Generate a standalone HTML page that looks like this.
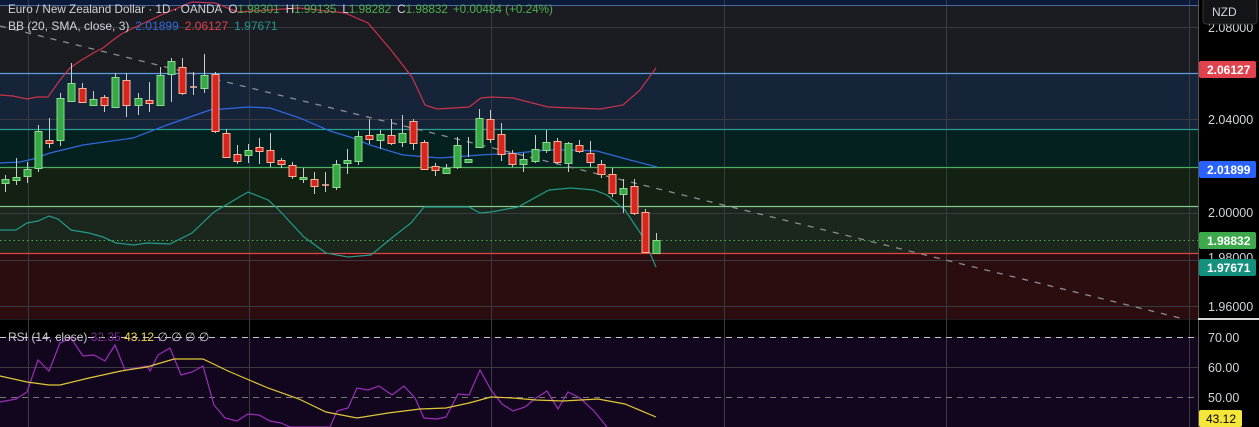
<!DOCTYPE html>
<html><head><meta charset="utf-8"><style>
html,body{margin:0;padding:0;background:#000;width:1259px;height:427px;overflow:hidden}
svg{display:block;font-family:"Liberation Sans",sans-serif}
</style></head><body>
<svg width="1259" height="427" viewBox="0 0 1259 427" xmlns="http://www.w3.org/2000/svg">
<rect x="0" y="0" width="1198" height="320" fill="#1b1c21"/>
<rect x="0" y="0" width="1198" height="5" fill="#0c1a3a"/>
<rect x="0" y="73" width="1198" height="56" fill="#16243a"/>
<rect x="0" y="129" width="1198" height="38" fill="#04201f"/>
<rect x="0" y="167" width="1198" height="40" fill="#132113"/>
<rect x="0" y="207" width="1198" height="46" fill="#1b261c"/>
<rect x="0" y="253" width="1198" height="66" fill="#2b0d10"/>
<rect x="0" y="320" width="1198" height="107" fill="#000"/>
<rect x="0" y="337" width="1198" height="90" fill="#12061f"/>
<g stroke="#3a3b40" stroke-width="1">
<line x1="0" y1="27.5" x2="1198" y2="27.5"/>
<line x1="0" y1="119.5" x2="1198" y2="119.5"/>
<line x1="0" y1="213.5" x2="1198" y2="213.5"/>
<line x1="0" y1="260.5" x2="1198" y2="260.5"/>
<line x1="0" y1="306.5" x2="1198" y2="306.5"/>
<line x1="0" y1="367.5" x2="1198" y2="367.5"/>
<line x1="28.5" y1="0" x2="28.5" y2="427"/>
<line x1="249.5" y1="0" x2="249.5" y2="427"/>
<line x1="491.5" y1="0" x2="491.5" y2="427"/>
<line x1="724.5" y1="0" x2="724.5" y2="427"/>
<line x1="946.5" y1="0" x2="946.5" y2="427"/>
<line x1="1189.5" y1="0" x2="1189.5" y2="427"/>
</g>
<line x1="0" y1="5.5" x2="1198" y2="5.5" stroke="#4f6a9a"/>
<line x1="0" y1="73.5" x2="1198" y2="73.5" stroke="#5b9fe0" stroke-width="1.3"/>
<line x1="0" y1="129.5" x2="1198" y2="129.5" stroke="#2a9d91" stroke-width="1.3"/>
<line x1="0" y1="167.5" x2="1198" y2="167.5" stroke="#4caf60" stroke-width="1.3"/>
<line x1="0" y1="206.5" x2="1198" y2="206.5" stroke="#82c98a" stroke-width="1.3"/>
<line x1="0" y1="240.5" x2="1198" y2="240.5" stroke="#4caf50" stroke-dasharray="1.5 3"/>
<line x1="0" y1="253.5" x2="1198" y2="253.5" stroke="#e04545" stroke-width="1.3"/>
<line x1="0" y1="26" x2="1180" y2="318" stroke="#8a8c92" stroke-width="1.3" stroke-dasharray="6 7"/>
<polyline fill="none" stroke="#c8334a" stroke-width="1.2" points="0,95 13,96 27,99 37,97 48,97 60,80 70,68 80,61 95,52 103,48 113,40 123,33 161,15 192,2 215,3 238,12 268,10 299,8 345,13 368,23 391,50 412,77 425,105 437,109 469,107 481,98 492,97 513,98 548,107 600,109 623,105 640,90 656,68"/>
<polyline fill="none" stroke="#2f6ae0" stroke-width="1.2" points="0,163 20,162 33,159 50,153 83,145 133,138 167,125 210,110 248,107 270,108 300,118 330,131 350,137 370,145 403,155 440,158 480,155 517,153 547,150 570,150 597,151 630,160 657,167"/>
<polyline fill="none" stroke="#239a8a" stroke-width="1.2" points="0,230 16,230 27,223 38,221 49,216 58,219 71,230 89,233 103,237 116,243 134,245 147,243 170,244 192,233 214,212 248,192 268,200 277,208 304,237 326,253 348,257 371,255 393,237 411,223 424,207 469,207 480,213 491,212 518,207 549,190 571,188 594,190 607,195 625,210 643,237 656,267"/>
<g stroke-width="1">
<g stroke="#c9cbd0">
<line x1="5.5" y1="175" x2="5.5" y2="192"/><line x1="16.5" y1="158" x2="16.5" y2="185"/><line x1="27.5" y1="162" x2="27.5" y2="183"/><line x1="38.5" y1="125" x2="38.5" y2="172"/><line x1="49.5" y1="118" x2="49.5" y2="148"/><line x1="60.5" y1="93" x2="60.5" y2="146"/><line x1="71.5" y1="63" x2="71.5" y2="102"/><line x1="82.5" y1="83" x2="82.5" y2="102"/><line x1="93.5" y1="91" x2="93.5" y2="105"/><line x1="104.5" y1="95" x2="104.5" y2="112"/><line x1="115.5" y1="73" x2="115.5" y2="108"/><line x1="126.5" y1="73" x2="126.5" y2="117"/><line x1="138.5" y1="93" x2="138.5" y2="115"/><line x1="149.5" y1="82" x2="149.5" y2="112"/><line x1="160.5" y1="67" x2="160.5" y2="105"/><line x1="171.5" y1="58" x2="171.5" y2="102"/><line x1="182.5" y1="58" x2="182.5" y2="95"/><line x1="193.5" y1="72" x2="193.5" y2="95"/><line x1="204.5" y1="54" x2="204.5" y2="93"/><line x1="215.5" y1="72" x2="215.5" y2="133"/><line x1="226.5" y1="129" x2="226.5" y2="157"/><line x1="237.5" y1="145" x2="237.5" y2="164"/><line x1="248.5" y1="144" x2="248.5" y2="163"/><line x1="259.5" y1="138" x2="259.5" y2="164"/><line x1="270.5" y1="133" x2="270.5" y2="167"/><line x1="281.5" y1="158" x2="281.5" y2="168"/><line x1="292.5" y1="162" x2="292.5" y2="179"/><line x1="303.5" y1="168" x2="303.5" y2="183"/><line x1="314.5" y1="172" x2="314.5" y2="194"/><line x1="325.5" y1="172" x2="325.5" y2="192"/><line x1="336.5" y1="160" x2="336.5" y2="190"/><line x1="347.5" y1="149" x2="347.5" y2="174"/><line x1="358.5" y1="131" x2="358.5" y2="165"/><line x1="369.5" y1="119" x2="369.5" y2="144"/><line x1="380.5" y1="130" x2="380.5" y2="149"/><line x1="391.5" y1="119" x2="391.5" y2="145"/><line x1="402.5" y1="115" x2="402.5" y2="147"/><line x1="413.5" y1="119" x2="413.5" y2="150"/><line x1="424.5" y1="140" x2="424.5" y2="170"/><line x1="435.5" y1="163" x2="435.5" y2="176"/><line x1="446.5" y1="164" x2="446.5" y2="174"/><line x1="457.5" y1="137" x2="457.5" y2="169"/><line x1="468.5" y1="137" x2="468.5" y2="157"/><line x1="479.5" y1="109" x2="479.5" y2="147"/><line x1="490.5" y1="110" x2="490.5" y2="143"/><line x1="501.5" y1="123" x2="501.5" y2="161"/><line x1="512.5" y1="150" x2="512.5" y2="167"/><line x1="523.5" y1="153" x2="523.5" y2="172"/><line x1="535.5" y1="135" x2="535.5" y2="163"/><line x1="546.5" y1="130" x2="546.5" y2="153"/><line x1="557.5" y1="138" x2="557.5" y2="164"/><line x1="568.5" y1="142" x2="568.5" y2="172"/><line x1="579.5" y1="140" x2="579.5" y2="153"/><line x1="590.5" y1="141" x2="590.5" y2="167"/><line x1="601.5" y1="160" x2="601.5" y2="178"/><line x1="612.5" y1="168" x2="612.5" y2="197"/><line x1="623.5" y1="179" x2="623.5" y2="213"/><line x1="634.5" y1="179" x2="634.5" y2="215"/><line x1="645.5" y1="209" x2="645.5" y2="253"/><line x1="656.5" y1="233" x2="656.5" y2="253"/>
</g>
<g fill="#33a845" stroke="#8fd98f">
<rect x="2" y="179.5" width="7" height="4"/><rect x="13" y="177.5" width="7" height="3"/><rect x="24" y="169.5" width="7" height="7"/><rect x="35" y="131.5" width="7" height="37"/><rect x="57" y="98.5" width="7" height="42"/><rect x="68" y="83.5" width="7" height="18"/><rect x="90" y="99.5" width="7" height="6"/><rect x="112" y="77.5" width="7" height="30"/><rect x="135" y="98.5" width="7" height="7"/><rect x="157" y="75.5" width="7" height="30"/><rect x="168" y="61.5" width="7" height="13"/><rect x="201" y="75.5" width="7" height="13"/><rect x="245" y="150.5" width="7" height="5"/><rect x="300" y="177.5" width="7" height="2"/><rect x="333" y="164.5" width="7" height="23"/><rect x="344" y="160.5" width="7" height="3"/><rect x="355" y="136.5" width="7" height="25"/><rect x="377" y="134.5" width="7" height="6"/><rect x="399" y="133.5" width="7" height="9"/><rect x="443" y="168.5" width="7" height="5"/><rect x="454" y="145.5" width="7" height="22"/><rect x="465" y="159.5" width="7" height="3"/><rect x="476" y="118.5" width="7" height="29"/><rect x="520" y="159.5" width="7" height="5"/><rect x="532" y="149.5" width="7" height="12"/><rect x="543" y="142.5" width="7" height="8"/><rect x="565" y="143.5" width="7" height="20"/><rect x="620" y="188.5" width="7" height="6"/><rect x="653" y="240.5" width="7" height="13"/>
</g>
<g fill="#d8261e" stroke="#ffb49a">
<rect x="46" y="140.5" width="7" height="3"/><rect x="79" y="88.5" width="7" height="14"/><rect x="101" y="97.5" width="7" height="8"/><rect x="123" y="80.5" width="7" height="25"/><rect x="146" y="100.5" width="7" height="3"/><rect x="179" y="67.5" width="7" height="26"/><rect x="212" y="74.5" width="7" height="57"/><rect x="223" y="133.5" width="7" height="24"/><rect x="234" y="154.5" width="7" height="7"/><rect x="256" y="147.5" width="7" height="4"/><rect x="267" y="150.5" width="7" height="12"/><rect x="278" y="160.5" width="7" height="4"/><rect x="289" y="165.5" width="7" height="11"/><rect x="311" y="179.5" width="7" height="7"/><rect x="366" y="135.5" width="7" height="4"/><rect x="388" y="135.5" width="7" height="8"/><rect x="410" y="121.5" width="7" height="22"/><rect x="421" y="142.5" width="7" height="27"/><rect x="432" y="166.5" width="7" height="4"/><rect x="487" y="119.5" width="7" height="20"/><rect x="498" y="134.5" width="7" height="20"/><rect x="509" y="153.5" width="7" height="11"/><rect x="554" y="141.5" width="7" height="21"/><rect x="576" y="145.5" width="7" height="6"/><rect x="587" y="153.5" width="7" height="9"/><rect x="598" y="164.5" width="7" height="10"/><rect x="609" y="174.5" width="7" height="19"/><rect x="631" y="186.5" width="7" height="27"/><rect x="642" y="212.5" width="7" height="40"/>
</g>
<g stroke="#f5b49a" stroke-width="1.5"><line x1="190" y1="87" x2="197" y2="87"/><line x1="322" y1="185" x2="329" y2="185"/></g>
</g>
<line x1="0" y1="337.5" x2="1198" y2="337.5" stroke="#c8c8c8" stroke-dasharray="6 5"/>
<line x1="0" y1="397.5" x2="1198" y2="397.5" stroke="#777" stroke-dasharray="6 5"/>
<polyline fill="none" stroke="#9a2fb8" stroke-width="1.2" points="0,402 16,399 27,392 38,360 49,371 60,343 71,338 83,356 94,355 105,361 115,345 125,370 147,366 150,371 158,355 170,348 181,375 192,372 203,366 214,405 225,418 237,421 248,414 259,415 270,421 281,423 290,427 330,427 337,411 348,408 357,388 368,390 379,386 392,395 404,386 415,398 424,418 437,419 446,417 458,394 469,395 480,370 491,390 502,404 513,411 525,407 536,398 547,391 558,409 568,392 580,398 594,411 607,427"/>
<polyline fill="none" stroke="#e0c838" stroke-width="1.2" points="0,376 27,382 49,385 60,385 89,378 121,371 147,367 174,359 203,359 228,371 268,388 299,399 326,412 357,418 388,413 420,409 446,408 469,403 491,397 513,398 536,400 563,401 598,399 625,404 656,417"/>
<text x="8" y="341" font-size="12" fill="#c8cad0">RSI (14, close) <tspan fill="#7b2a94">32.35</tspan> <tspan fill="#f0d840">43.12</tspan> <tspan fill="#c8cad0">∅ ∅ ∅ ∅</tspan></text>
<text x="8" y="13" font-size="11.7" fill="#d1d4dc">Euro / New Zealand Dollar · 1D · OANDA<tspan dx="6">O</tspan><tspan fill="#4caf50">1.98301</tspan><tspan dx="6">H</tspan><tspan fill="#4caf50">1.99135</tspan><tspan dx="6">L</tspan><tspan fill="#4caf50">1.98282</tspan><tspan dx="6">C</tspan><tspan fill="#4caf50">1.98832</tspan><tspan dx="5" fill="#4caf50">+0.00484 (+0.24%)</tspan></text>
<text x="8" y="30" font-size="12" fill="#d1d4dc">BB (20, SMA, close, 3)<tspan dx="6" fill="#2f6ae0">2.01899</tspan><tspan dx="6" fill="#e0404a">2.06127</tspan><tspan dx="6" fill="#1c9a8a">1.97671</tspan></text>
<rect x="1198" y="0" width="61" height="319" fill="#000"/>
<rect x="1198" y="321" width="61" height="106" fill="#000"/>
<line x1="1198.5" y1="0" x2="1198.5" y2="427" stroke="#555"/>
<line x1="1198" y1="319" x2="1259" y2="319" stroke="#d8d8d8" stroke-width="2"/>
<g font-size="12.5" fill="#d1d4dc">
<text x="1208" y="32">2.08000</text>
<text x="1208" y="124">2.04000</text>
<text x="1208" y="217">2.00000</text>
<text x="1208" y="262">1.98000</text>
<text x="1208" y="311">1.96000</text>
<text x="1208" y="342">70.00</text>
<text x="1208" y="372">60.00</text>
<text x="1208" y="402">50.00</text>
</g>
<rect x="1203" y="-1" width="54" height="25" rx="3" fill="#131418" stroke="#333"/>
<text x="1212" y="16" font-size="12" fill="#d1d4dc">NZD</text>
<g font-size="12" font-weight="bold" fill="#fff">
<rect x="1199" y="61" width="57" height="17" rx="2" fill="#e0424e"/><text x="1207" y="74">2.06127</text>
<rect x="1199" y="161" width="57" height="17" rx="2" fill="#2962ff"/><text x="1207" y="174">2.01899</text>
<rect x="1199" y="232" width="57" height="17" rx="2" fill="#3caa4a"/><text x="1207" y="245">1.98832</text>
<rect x="1199" y="259" width="57" height="17" rx="2" fill="#14907e"/><text x="1207" y="272">1.97671</text>
<rect x="1199" y="410" width="43" height="17" rx="2" fill="#f5e63a"/><text x="1206" y="423" fill="#000" font-weight="normal">43.12</text>
</g>
</svg>
</body></html>
